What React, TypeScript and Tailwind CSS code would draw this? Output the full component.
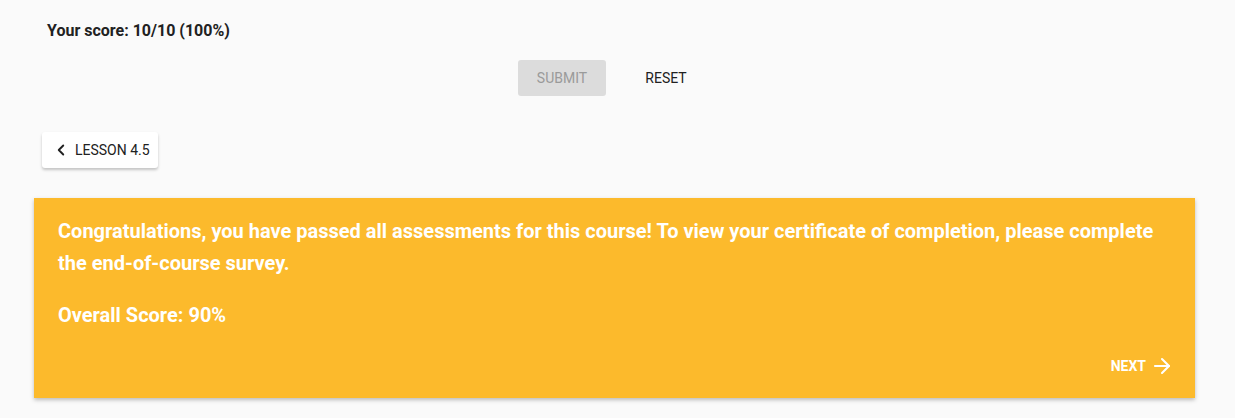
import { ChevronLeft, ArrowRight } from "lucide-react";

export default function App() {
  return (
    <div className="min-h-[418px] w-full bg-[#fafafa] font-['Roboto',sans-serif] text-[#212121]">
      <div className="pl-[47px] pt-[21px] text-[16px] font-bold leading-[20px]">
        Your score: 10/10 (100%)
      </div>

      <div className="mt-[19px] flex justify-center gap-[16px] pr-[7px]">
        <button
          type="button"
          disabled
          className="h-[36px] w-[88px] rounded-[3px] bg-[#dcdcdc] text-[14px] font-normal uppercase text-[#9a9a9a]"
        >
          Submit
        </button>
        <button
          type="button"
          className="h-[36px] w-[88px] rounded-[3px] text-[14px] font-normal uppercase text-[#212121]"
        >
          Reset
        </button>
      </div>

      <div className="mt-[36px] pl-[42px]">
        <button
          type="button"
          className="flex h-[36px] items-center gap-[5px] rounded-[3px] bg-white pl-[10px] pr-[8px] text-[14px] font-normal uppercase text-[#212121] shadow-[0_2px_3px_rgba(0,0,0,0.22)]"
        >
          <ChevronLeft size={18} strokeWidth={2.5} />
          Lesson 4.5
        </button>
      </div>

      <div className="mb-[23px] ml-[34px] mr-[40px] mt-[30px] bg-[#fcba2c] px-[24px] pb-[20px] pt-[17px] text-white shadow-[0_2px_4px_rgba(0,0,0,0.25)]">
        <p className="text-[20px] font-bold leading-[32px]">
          Congratulations, you have passed all assessments for this course! To view your certificate of
          completion, please complete the end-of-course survey.
        </p>
        <p className="mt-[20px] text-[20px] font-bold leading-[32px]">Overall Score: 90%</p>
        <div className="mt-[23px] flex justify-end">
          <button
            type="button"
            className="-mr-[3px] flex items-center gap-[4px] text-[14px] font-bold uppercase text-white"
          >
            Next
            <ArrowRight size={24} strokeWidth={2.1} />
          </button>
        </div>
      </div>
    </div>
  );
}
